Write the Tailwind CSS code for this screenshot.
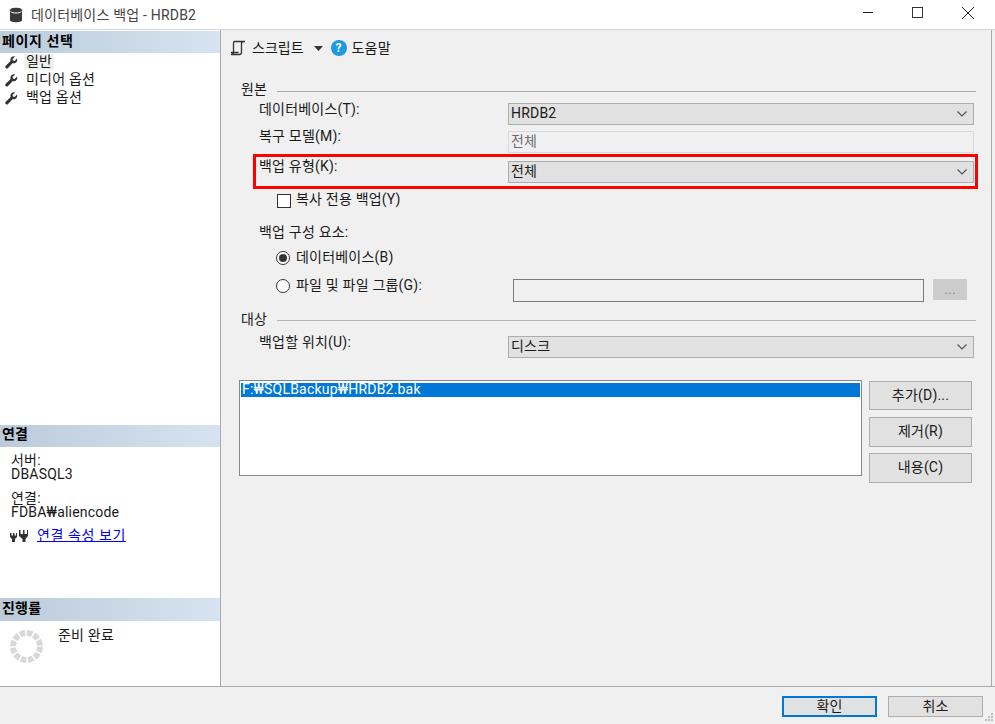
<!DOCTYPE html>
<html lang="ko">
<head>
  <meta charset="UTF-8">
  <title>데이터베이스 백업 - HRDB2</title>
  <script src="https://cdn.jsdelivr.net/npm/@tailwindcss/browser@4"></script>
</head>
<body class="w-[995px] h-[724px] overflow-hidden bg-[#f0f0f0] text-[14px] leading-[16px] tracking-[0.2px] text-[#1a1a1a] font-['Roboto','Noto_Sans_CJK_KR',sans-serif]">

  <!-- title bar -->
  <div class="h-[30px] bg-white border-b border-[#d8d8d8] flex items-center">
    <svg class="ml-[9px] w-[14px] h-[16px]" viewBox="0 0 14 16"><path d="M1 3c0-3 12-3 12 0v10c0 3-12 3-12 0z" fill="#3a3a3a"/><path d="M1.500 4.500c2 2 9 2 11 0" fill="none" stroke="#fff" stroke-width="1"/></svg>
    <span class="ml-[8px] text-[#444]">데이터베이스 백업 - HRDB2</span>
    <div class="ml-auto mr-[2px] flex items-center">
      <svg class="w-[50px] h-[29px]" viewBox="0 0 50 29"><path d="M20 12.500h10" stroke="#222" stroke-width="1"/></svg>
      <svg class="w-[50px] h-[29px]" viewBox="0 0 50 29"><rect x="19.500" y="7.500" width="10" height="10" fill="none" stroke="#333" stroke-width="1"/></svg>
      <svg class="w-[50px] h-[29px]" viewBox="0 0 50 29"><path d="M19 7l12 12M31 7L19 19" stroke="#222" stroke-width="1"/></svg>
    </div>
  </div>

  <div class="flex h-[657px] border-b border-[#a9a9a9]">
    <!-- left panel -->
    <aside class="w-[221px] shrink-0 bg-white border-r border-[#a9a9a9] flex flex-col">
      <div class="h-[22px] mt-[1px] pb-[2px] bg-gradient-to-r from-[#bccbda] to-[#d6e4f1] pl-[2px] flex items-center font-bold text-black tracking-[0.6px]">페이지 선택</div>
      <div>
        <div class="h-[18px] flex items-center pl-[5px] gap-[6px]">
          <svg class="w-[13px] h-[13px]" viewBox="0 0 13 13"><path d="M12 2.500L9.500 5 8 4.500 7.500 3 10 .5C8 0 6 1 5.500 3c-.2.700-.1 1.300.1 1.900L.8 9.700c-.7.700-.7 1.600 0 2.200.7.700 1.500.7 2.200 0l4.800-4.800c.6.200 1.200.3 1.900.1 2-.5 3-2.500 2.300-4.700z" fill="#333"/></svg>
          <span class="bg-[#f0f0f0] px-[2px] h-[16px] leading-[14px]">일반</span>
        </div>
        <div class="h-[18px] flex items-center pl-[5px] gap-[6px]">
          <svg class="w-[13px] h-[13px]" viewBox="0 0 13 13"><path d="M12 2.500L9.500 5 8 4.500 7.500 3 10 .5C8 0 6 1 5.500 3c-.2.700-.1 1.300.1 1.900L.8 9.700c-.7.700-.7 1.600 0 2.200.7.700 1.500.7 2.200 0l4.800-4.800c.6.200 1.200.3 1.900.1 2-.5 3-2.500 2.300-4.700z" fill="#333"/></svg>
          <span class="px-[2px] h-[16px] leading-[14px]">미디어 옵션</span>
        </div>
        <div class="h-[18px] flex items-center pl-[5px] gap-[6px]">
          <svg class="w-[13px] h-[13px]" viewBox="0 0 13 13"><path d="M12 2.500L9.500 5 8 4.500 7.500 3 10 .5C8 0 6 1 5.500 3c-.2.700-.1 1.300.1 1.900L.8 9.700c-.7.700-.7 1.600 0 2.200.7.700 1.500.7 2.200 0l4.800-4.800c.6.200 1.200.3 1.900.1 2-.5 3-2.500 2.300-4.700z" fill="#333"/></svg>
          <span class="px-[2px] h-[16px] leading-[14px]">백업 옵션</span>
        </div>
      </div>

      <div class="mt-auto h-[22px] pb-[4px] bg-gradient-to-r from-[#bccbda] to-[#d6e4f1] pl-[2px] flex items-center font-bold text-black">연결</div>
      <div class="h-[151px] pl-[11px] pt-[6px] leading-[14px]">
        <div>서버:</div>
        <div>DBASQL3</div>
        <div class="mt-[10px]">연결:</div>
        <div>FDBA₩aliencode</div>
        <div class="flex items-center mt-[9px] ml-[-2px]">
          <svg class="w-[20px] h-[13px]" viewBox="0 0 20 13"><path d="M1 4h1.500v2.500H4V4h1.500v2.500H7V4h1v4l-2 2v3H3v-3L1 8zM10 1h1.500v4H14V1h1.500v4H18V1h1v6l-2.500 3v3h-3v-3L10 7z" fill="#333"/></svg>
          <a class="ml-[8px] text-[#0000ee] underline tracking-[0.6px]">연결 속성 보기</a>
        </div>
      </div>

      <div class="h-[23px] pb-[4px] bg-gradient-to-r from-[#bccbda] to-[#d6e4f1] pl-[2px] flex items-center font-bold text-black">진행률</div>
      <div class="h-[65px] flex pl-[10px] pt-[9px]">
        <svg class="w-[33px] h-[33px]" viewBox="0 0 33 33"><circle cx="16.500" cy="16.500" r="13.500" fill="none" stroke="#d8d8d8" stroke-width="6" stroke-dasharray="5.500 1.570"/></svg>
        <span class="ml-[15px] mt-[-3px]">준비 완료</span>
      </div>
    </aside>

    <!-- right panel -->
    <main class="relative w-[771px] shrink-0 border-r border-[#a9a9a9] pl-[18px]">
      <div class="h-[36px] flex items-center ml-[-9px]">
        <svg class="w-[16px] h-[16px]" viewBox="0 0 16 16"><path d="M4.500 1.500h10.500M4.500 1.500C3.500 1.500 3.500 2.500 3.500 4v8c0 1.500-.5 2.500-2.500 2.500h8.500c1.500 0 2-1 2-2.500V3c0-1 .7-1.500 3-1.500M1 12.500h7.500" fill="none" stroke="#333" stroke-width="1.300"/></svg>
        <span class="ml-[6px] tracking-normal">스크립트</span>
        <svg class="ml-[10px] w-[9px] h-[5px]" viewBox="0 0 9 5"><path d="M0 0h9L4.500 5z" fill="#333"/></svg>
        <span class="ml-[8px] w-[16px] h-[16px] rounded-full bg-[#1c9ae0] text-white font-bold text-[12px] leading-[16px] text-center">?</span>
        <span class="ml-[5px]">도움말</span>
      </div>

      <div class="flex items-start mt-[15px] h-[16px]">
        <span class="ml-[2px]">원본</span>
        <div class="ml-[10px] mt-[10px] w-[699px] h-px bg-[#a9a9a9]"></div>
      </div>

      <div class="flex items-center mt-[6px] h-[22px] pl-[20px]">
        <span class="w-[249px] mt-[-10px]">데이터베이스(T):</span>
        <div class="w-[466px] h-[22px] bg-[#e1e1e1] border border-[#adadad] flex items-center justify-between pl-[2px] pr-[6px]">
          <span class="pb-[2px]">HRDB2</span>
          <svg class="w-[10px] h-[6px]" viewBox="0 0 10 6"><path d="M.5.500L5 5 9.500.5" fill="none" stroke="#555" stroke-width="1.200"/></svg>
        </div>
      </div>

      <div class="flex items-center mt-[6px] h-[22px] pl-[20px]">
        <span class="w-[249px] mt-[-12px]">복구 모델(M):</span>
        <div class="w-[466px] h-[22px] bg-[#f0f0f0] border border-[#d9d9d9] flex items-center pl-[2px] pb-[2px] text-[#6d6d6d]">전체</div>
      </div>

      <div class="flex items-center mt-[8px] h-[22px] pl-[20px]">
        <span class="w-[249px] mt-[-12px]">백업 유형(K):</span>
        <div class="w-[466px] h-[22px] bg-[#e1e1e1] border border-[#adadad] flex items-center justify-between pl-[2px] pr-[6px]">
          <span class="pb-[2px]">전체</span>
          <svg class="w-[10px] h-[6px]" viewBox="0 0 10 6"><path d="M.5.500L5 5 9.500.5" fill="none" stroke="#555" stroke-width="1.200"/></svg>
        </div>
      </div>

      <div class="flex items-center mt-[11px] h-[14px] pl-[38px]">
        <div class="w-[14px] h-[14px] bg-white border border-[#333]"></div>
        <span class="ml-[5px] mt-[-4px]">복사 전용 백업(Y)</span>
      </div>

      <div class="mt-[16px] h-[16px] pl-[20px]">백업 구성 요소:</div>

      <div class="flex items-center mt-[11px] h-[14px] pl-[37px]">
        <div class="w-[14px] h-[14px] rounded-full bg-white border border-[#333] flex items-center justify-center"><div class="w-[8px] h-[8px] rounded-full bg-[#333]"></div></div>
        <span class="ml-[6px] mt-[-2px]">데이터베이스(B)</span>
      </div>

      <div class="flex items-start mt-[14px] h-[23px] pl-[37px]">
        <div class="w-[14px] h-[14px] rounded-full bg-white border border-[#333]"></div>
        <span class="w-[217px] ml-[6px] mt-[-2px]">파일 및 파일 그룹(G):</span>
        <div class="w-[411px] h-[23px] bg-[#f0f0f0] border border-[#7a7a7a]"></div>
        <div class="ml-[9px] w-[34px] h-[21px] bg-[#cccccc] text-[#8a8a8a] text-center leading-[20px]">...</div>
      </div>

      <div class="flex items-start mt-[9px] h-[16px]">
        <span class="ml-[2px]">대상</span>
        <div class="ml-[10px] mt-[9px] w-[699px] h-px bg-[#b4b4b4]"></div>
      </div>

      <div class="flex items-center mt-[9px] h-[22px] pl-[20px]">
        <span class="w-[249px] mt-[-11px]">백업할 위치(U):</span>
        <div class="w-[466px] h-[22px] bg-[#e1e1e1] border border-[#adadad] flex items-center justify-between pl-[2px] pr-[6px]">
          <span class="pb-[2px]">디스크</span>
          <svg class="w-[10px] h-[6px]" viewBox="0 0 10 6"><path d="M.5.500L5 5 9.500.5" fill="none" stroke="#555" stroke-width="1.200"/></svg>
        </div>
      </div>

      <div class="flex mt-[22px]">
        <div class="w-[623px] h-[96px] bg-white border border-[#828790] p-px">
          <div class="h-[14px] mt-px bg-[#0078d7] text-white leading-[13px] pl-[1px]">F:₩SQLBackup₩HRDB2.bak</div>
        </div>
        <div class="ml-[7px] w-[103px] flex flex-col mt-px">
          <div class="h-[29px] pb-[2px] bg-[#e1e1e1] border border-[#adadad] flex items-center justify-center">추가(D)...</div>
          <div class="mt-[7px] h-[30px] pb-[2px] bg-[#e1e1e1] border border-[#adadad] flex items-center justify-center">제거(R)</div>
          <div class="mt-[6px] h-[30px] pb-[2px] bg-[#e1e1e1] border border-[#adadad] flex items-center justify-center">내용(C)</div>
        </div>
      </div>

      <!-- red highlight drawn over the backup type row -->
      <div class="absolute left-[32px] top-[124px] w-[725px] h-[35px] border-[3px] border-[#ff0000]"></div>
    </main>
  </div>

  <!-- footer -->
  <div class="relative h-[36px] flex justify-end items-start gap-[11px] pr-[12px] pt-[9px]">
    <div class="w-[95px] h-[21px] pb-[2px] bg-[#e1e1e1] border-2 border-[#0078d7] flex items-center justify-center">확인</div>
    <div class="w-[95px] h-[21px] pb-[2px] bg-[#e1e1e1] border border-[#adadad] flex items-center justify-center">취소</div>
    <svg class="absolute right-[1px] bottom-[1px] w-[10px] h-[10px]" viewBox="0 0 10 10"><path d="M7 1h2v2H7zM4 4h2v2H4zM7 4h2v2H7zM1 7h2v2H1zM4 7h2v2H4zM7 7h2v2H7z" fill="#bdbdbd"/></svg>
  </div>
</body>
</html>
